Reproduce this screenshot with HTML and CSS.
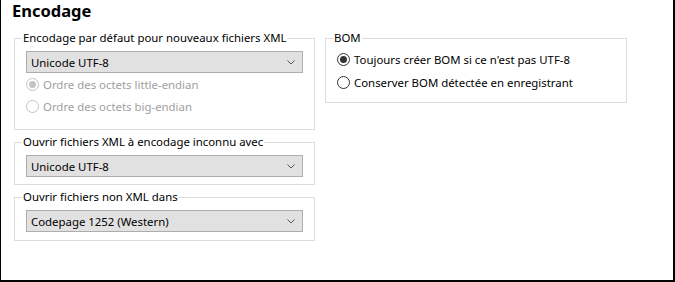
FILE: index.html
```html
<!DOCTYPE html>
<html lang="fr">
<head>
    <meta charset="UTF-8">
    <title>Encodage</title>
    <link rel="stylesheet" href="styles.css">
</head>
<body>
    <div class="page">
        <h1>Encodage</h1>

        <div class="columns">
            <div class="left-col">
                <!-- nouveaux fichiers -->
                <fieldset class="group group-new">
                    <legend>Encodage par défaut pour nouveaux fichiers XML</legend>
                    <div class="combo">
                        <span>Unicode UTF-8</span>
                        <svg class="chevron" width="8" height="5" viewBox="0 0 8 5"><path d="M0.5 0.5 L4 4 L7.5 0.5" fill="none" stroke="#555" stroke-width="1"/></svg>
                    </div>
                    <div class="radio disabled checked"><span class="dot"></span>Ordre des octets little-endian</div>
                    <div class="radio disabled"><span class="dot"></span>Ordre des octets big-endian</div>
                </fieldset>

                <!-- encodage inconnu -->
                <fieldset class="group">
                    <legend>Ouvrir fichiers XML à encodage inconnu avec</legend>
                    <div class="combo">
                        <span>Unicode UTF-8</span>
                        <svg class="chevron" width="8" height="5" viewBox="0 0 8 5"><path d="M0.5 0.5 L4 4 L7.5 0.5" fill="none" stroke="#555" stroke-width="1"/></svg>
                    </div>
                </fieldset>

                <!-- non XML -->
                <fieldset class="group">
                    <legend>Ouvrir fichiers non XML dans</legend>
                    <div class="combo">
                        <span>Codepage 1252 (Western)</span>
                        <svg class="chevron" width="8" height="5" viewBox="0 0 8 5"><path d="M0.5 0.5 L4 4 L7.5 0.5" fill="none" stroke="#555" stroke-width="1"/></svg>
                    </div>
                </fieldset>
            </div>

            <fieldset class="group group-bom">
                <legend>BOM</legend>
                <div class="radio checked"><span class="dot"></span>Toujours créer BOM si ce n'est pas UTF-8</div>
                <div class="radio"><span class="dot"></span>Conserver BOM détectée en enregistrant</div>
            </fieldset>
        </div>
    </div>
</body>
</html>
```

FILE: styles.css
```css
body {
    margin: 0;
    font-family: "Noto Sans", "Open Sans", sans-serif;
    font-size: 11.4px;
    color: #000;
    background: #fff;
}
.page {
    box-sizing: border-box;
    height: 282px;
    border-left: 1px solid #000;
    border-right: 2px solid #000;
    border-bottom: 2px solid #000;
    padding: 0 0 0 13px;
}
h1 {
    margin: 0 0 0 -2px;
    font-size: 16.5px;
    font-weight: bold;
    line-height: 22px;
    height: 30px;
}
.columns {
    display: flex;
    gap: 10px;
    align-items: flex-start;
}
.left-col {
    display: flex;
    flex-direction: column;
    gap: 4px;
    width: 301px;
}
.group {
    margin: 0;
    padding: 0 11px 7px 11px;
    border: 1px solid #dcdcdc;
    min-width: 0;
}
.group:last-child {
    padding-bottom: 8px;
}
.group legend {
    padding: 0 1px;
    margin-left: -4px;
    line-height: 16px;
}
.group-new {
    padding-bottom: 12px;
}
.group-bom {
    width: 278px;
    padding-top: 2px;
    padding-bottom: 11px;
}
.combo {
    display: flex;
    align-items: center;
    justify-content: space-between;
    height: 20px;
    margin-top: 5px;
    padding: 0 7px 0 4px;
    background-color: #e1e1e1;
    border: 1px solid #adadad;
}
.chevron {
    display: block;
}
.radio {
    display: flex;
    align-items: center;
    gap: 4px;
    height: 22px;
}
.group-bom .radio {
    height: 23px;
}
.dot {
    box-sizing: border-box;
    width: 13px;
    height: 13px;
    border: 1px solid #333;
    border-radius: 50%;
    display: flex;
    align-items: center;
    justify-content: center;
}
.radio.checked .dot::after {
    content: "";
    width: 7px;
    height: 7px;
    border-radius: 50%;
    background: #333;
}
.radio.disabled {
    color: #a0a0a0;
}
.radio.disabled .dot {
    border-color: #c4c4c4;
}
.radio.disabled.checked .dot::after {
    background: #c4c4c4;
}
```
